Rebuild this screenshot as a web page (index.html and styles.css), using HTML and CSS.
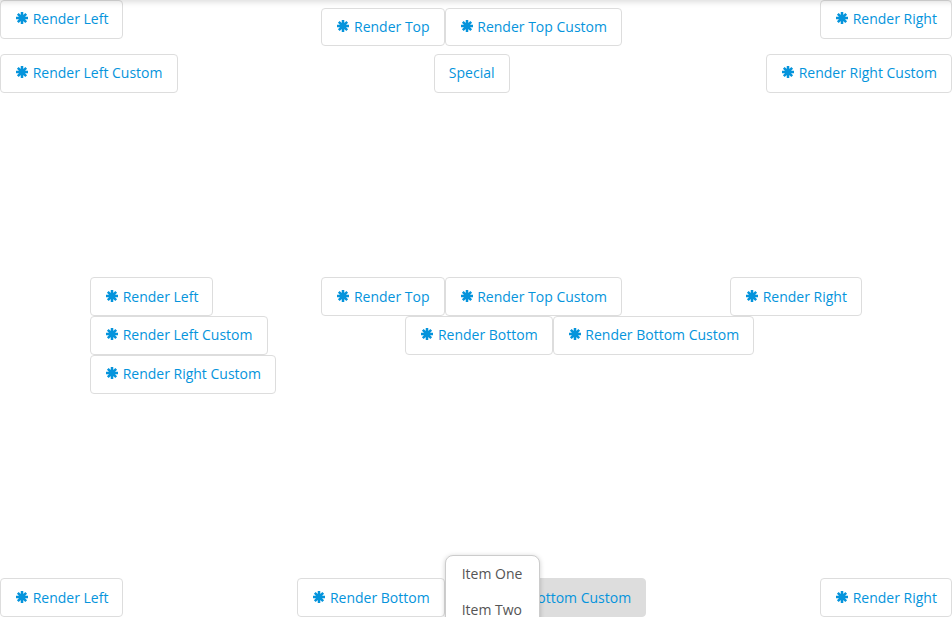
FILE: index.html
```html
<!DOCTYPE html>
<html lang="en">
<head>
<meta charset="utf-8">
<title>Popover alignment</title>
<link rel="stylesheet" href="styles.css">
</head>
<body>
<svg class="defs" width="0" height="0" aria-hidden="true">
  <symbol id="asterisk" viewBox="0 0 14 14">
    <g stroke="currentColor" fill="none">
      <path stroke-width="2.5" d="M7 1v12M1 7h12"/>
      <path stroke-width="2.5" d="M2.8 2.8l8.4 8.4M11.2 2.8l-8.4 8.4"/>
    </g>
    <circle cx="7" cy="7" r="3.4" fill="currentColor"/>
  </symbol>
</svg>
<main class="page">
  <section class="band band-top">
    <div class="column column-left">
      <button class="btn"><svg class="icon"><use href="#asterisk"/></svg>Render Left</button>
      <button class="btn"><svg class="icon"><use href="#asterisk"/></svg>Render Left Custom</button>
    </div>
    <div class="column column-center">
      <div class="group"><button class="btn"><svg class="icon"><use href="#asterisk"/></svg>Render Top</button><button class="btn"><svg class="icon"><use href="#asterisk"/></svg>Render Top Custom</button></div>
      <button class="btn">Special</button>
    </div>
    <div class="column column-right">
      <button class="btn"><svg class="icon"><use href="#asterisk"/></svg>Render Right</button>
      <button class="btn"><svg class="icon"><use href="#asterisk"/></svg>Render Right Custom</button>
    </div>
  </section>
  <section class="band band-middle">
    <div class="stack stack-left">
      <button class="btn"><svg class="icon"><use href="#asterisk"/></svg>Render Left</button>
      <button class="btn"><svg class="icon"><use href="#asterisk"/></svg>Render Left Custom</button>
      <button class="btn"><svg class="icon"><use href="#asterisk"/></svg>Render Right Custom</button>
    </div>
    <div class="stack stack-main">
      <div class="group group-split">
        <div class="group"><button class="btn"><svg class="icon"><use href="#asterisk"/></svg>Render Top</button><button class="btn"><svg class="icon"><use href="#asterisk"/></svg>Render Top Custom</button></div>
        <button class="btn"><svg class="icon"><use href="#asterisk"/></svg>Render Right</button>
      </div>
      <div class="group group-offset"><button class="btn"><svg class="icon"><use href="#asterisk"/></svg>Render Bottom</button><button class="btn"><svg class="icon"><use href="#asterisk"/></svg>Render Bottom Custom</button></div>
    </div>
  </section>
  <section class="band band-bottom">
    <button class="btn"><svg class="icon"><use href="#asterisk"/></svg>Render Left</button>
    <div class="group">
      <button class="btn"><svg class="icon"><use href="#asterisk"/></svg>Render Bottom</button>
      <div class="dropdown">
        <button class="btn btn-active"><svg class="icon"><use href="#asterisk"/></svg>Render Bottom Custom</button>
        <ul class="menu"><li>Item One</li><li>Item Two</li></ul>
      </div>
    </div>
    <button class="btn"><svg class="icon"><use href="#asterisk"/></svg>Render Right</button>
  </section>
</main>
</body>
</html>
```
FILE: styles.css
```css
* { box-sizing: border-box; }
body {
  margin: 0;
  background: #fff;
  color: #555;
  font: 14px/20px "Open Sans", sans-serif;
}
.defs { position: absolute; }
.page {
  position: relative;
  height: 617px;
  overflow: hidden;
  display: flex;
  flex-direction: column;
}
.page::before {
  content: "";
  position: absolute;
  top: -4px;
  left: -4px;
  right: -4px;
  height: 4px;
  box-shadow: 0 0 7px rgba(0, 0, 0, .28);
  z-index: 2;
}
.btn {
  display: inline-flex;
  align-items: center;
  flex: none;
  height: 38.75px;
  margin: 0;
  padding: 0 14.05px 1px 14px;
  border: 1px solid #ddd;
  border-radius: 4px;
  background: #fff;
  color: #0594dc;
  font: inherit;
  white-space: nowrap;
}
.icon {
  width: 14px;
  height: 14px;
  margin: 0 3.64px 2px 0;
  flex: none;
}
.group { display: flex; }
.band {
  display: flex;
  justify-content: space-between;
  align-items: flex-start;
}
.band-top {
  display: grid;
  grid-template-columns: 1fr auto 1fr;
  height: 277.3px;
}
.column {
  display: flex;
  flex-direction: column;
  gap: 15.6px;
  align-items: flex-start;
}
.column-center {
  gap: 8px;
  align-items: center;
  padding-top: 8px;
  margin-right: 8.6px;
}
.column-center .group .btn { height: 38px; }
.column-right { align-items: flex-end; }
.band-middle {
  height: 301px;
  padding: 0 90px;
}
.band-middle .btn,
.band-bottom .btn { padding-bottom: 0; }
.stack {
  display: flex;
  flex-direction: column;
  align-items: flex-start;
}
.stack-main { width: 540.7px; }
.group-split {
  width: 100%;
  justify-content: space-between;
}
.group-offset { margin-left: 84px; }
.dropdown { position: relative; }
.btn-active { background: #ddd; }
.menu {
  position: absolute;
  top: -23px;
  left: 0;
  width: 95px;
  margin: 0;
  padding: 0;
  list-style: none;
  background: #fff;
  border: 1px solid #ccc;
  border-radius: 8px;
  box-shadow: 0 1px 5px rgba(0, 0, 0, .2);
}
.menu li { padding: 8px 16px; }
```
